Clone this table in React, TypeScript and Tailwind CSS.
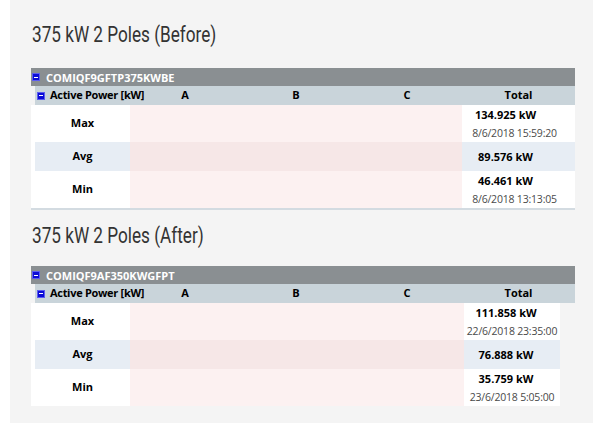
import React from "react";

type Row = {
  label: string;
  value: string;
  date?: string;
};

type Section = {
  title: string;
  device: string;
  totalWidth: string;
  pinkWidth: string;
  bodyWidth: string;
  valuePad: string;
  border: boolean;
  rows: Row[];
};

const sections: Section[] = [
  {
    title: "375 kW 2 Poles (Before)",
    device: "COMIQF9GFTP375KWBE",
    totalWidth: "w-[113px] pr-[8px]",
    pinkWidth: "w-[332px]",
    bodyWidth: "w-[544px]",
    valuePad: "pr-[18px]",
    border: true,
    rows: [
      { label: "Max", value: "134.925 kW", date: "8/6/2018 15:59:20" },
      { label: "Avg", value: "89.576 kW" },
      { label: "Min", value: "46.461 kW", date: "8/6/2018 13:13:05" },
    ],
  },
  {
    title: "375 kW 2 Poles (After)",
    device: "COMIQF9AF350KWGFPT",
    totalWidth: "w-[96px]",
    pinkWidth: "w-[334px]",
    bodyWidth: "w-[529px]",
    valuePad: "pr-[12px]",
    border: false,
    rows: [
      { label: "Max", value: "111.858 kW", date: "22/6/2018 23:35:00" },
      { label: "Avg", value: "76.888 kW" },
      { label: "Min", value: "35.759 kW", date: "23/6/2018 5:05:00" },
    ],
  },
];

function MinusBox() {
  return (
    <div className="w-[8px] h-[8px] bg-[#0b0bd6] border border-[#5c5cf0] flex items-center justify-center shrink-0">
      <div className="w-[4px] h-[1px] bg-white" />
    </div>
  );
}

function PowerTable({ s }: { s: Section }) {
  return (
    <div className="w-[544px] font-['Open_Sans',sans-serif] text-[11px]">
      {/* device bar */}
      <div className="h-[18px] bg-[#8a8f92] flex items-center pl-[1px]">
        <MinusBox />
        <span className="ml-[6px] font-bold text-white leading-none">{s.device}</span>
      </div>

      {/* column header */}
      <div className="ml-[4px] h-[19px] bg-[#c9d4da] flex items-center font-bold text-black">
        <div className="w-[95px] flex items-center pl-[2px]">
          <MinusBox />
          <span className="ml-[5px] whitespace-nowrap tracking-[-0.3px]">Active Power [kW]</span>
        </div>
        <div className="w-[110px] text-center">A</div>
        <div className="w-[112px] text-center">B</div>
        <div className="w-[110px] text-center">C</div>
        <div className="w-[113px] text-center">Total</div>
      </div>

      {/* body */}
      <div className={`${s.bodyWidth} bg-white pl-[4px] ${s.border ? "border-b-2 border-[#d3dbe1]" : ""}`}>
        {s.rows.map((r) => {
          const avg = r.label === "Avg";
          return (
            <div key={r.label} className={`flex ${avg ? "h-[29px]" : "h-[37px]"}`}>
              <div
                className={`w-[95px] flex items-center justify-center font-bold text-black ${
                  avg ? "bg-[#e7edf4]" : "bg-white"
                }`}
              >
                {r.label}
              </div>
              <div className={`${s.pinkWidth} ${avg ? "bg-[#f6e7e7]" : "bg-[#fcf1f1]"}`} />
              <div
                className={`${s.totalWidth} flex flex-col justify-center text-center ${
                  avg ? "bg-[#e7edf4]" : "bg-white"
                }`}
              >
                <div className={`font-bold text-black leading-[18px] ${s.valuePad}`}>{r.value}</div>
                {r.date && (
                  <div className="text-[#4a4a4a] text-[10.5px] leading-[18px] whitespace-nowrap tracking-[-0.2px]">
                    {r.date}
                  </div>
                )}
              </div>
            </div>
          );
        })}
      </div>
    </div>
  );
}

function Title({ children }: { children: React.ReactNode }) {
  return (
    <h2 className="font-['Roboto',sans-serif] text-[22px] leading-[30px] text-[#333] ml-[1px] whitespace-nowrap">
      <span className="inline-block origin-left scale-x-[0.78]">{children}</span>
    </h2>
  );
}

export default function App() {
  return (
    <div className="min-h-screen bg-white">
      <div className="ml-[10px] w-[583px] h-[423px] bg-[#f4f4f4] pl-[21px] pt-[20px]">
        <Title>{sections[0].title}</Title>
        <div className="mt-[18px]">
          <PowerTable s={sections[0]} />
        </div>
        <div className="mt-[11px]">
          <Title>{sections[1].title}</Title>
        </div>
        <div className="mt-[15px]">
          <PowerTable s={sections[1]} />
        </div>
      </div>
    </div>
  );
}
